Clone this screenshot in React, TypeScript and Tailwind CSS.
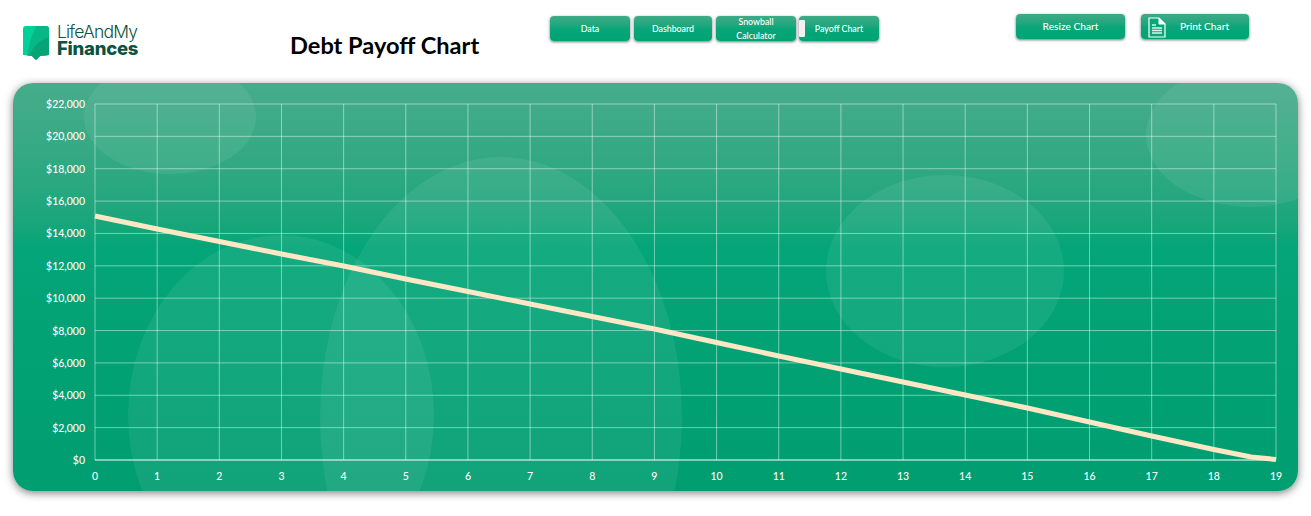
import React from "react";

const font = { fontFamily: '"Lato", "Open Sans", sans-serif' };

const X0 = 95;
const X1 = 1276;
const Y0 = 104;
const Y1 = 460;
const stepX = (X1 - X0) / 19;
const stepY = (Y1 - Y0) / 11;

const navButtons = [
  { label: "Data", w: "w-[80px]", ml: "ml-0" },
  { label: "Dashboard", w: "w-[78px]", ml: "ml-[4px]" },
  { label: "Snowball Calculator", w: "w-[80px]", ml: "ml-[4px]" },
];

function GreenButton({ className, children }: { className: string; children: React.ReactNode }) {
  return (
    <div
      className={`flex items-center justify-center rounded-[4px] bg-gradient-to-b from-[#3dab87] via-[#0aa67a] to-[#00a374] text-center text-white shadow-[0_1px_3px_rgba(0,0,0,0.55)] ${className}`}
    >
      {children}
    </div>
  );
}

function Logo() {
  return (
    <div className="flex items-center gap-[8px]">
      <svg width="26" height="34" viewBox="0 0 26 34" aria-hidden="true">
        <path d="M3 0H23a3 3 0 0 1 3 3V29L17 30L13 34L9 30L0 29V3a3 3 0 0 1 3-3Z" fill="#03cf98" />
        <path d="M13 0H23a3 3 0 0 1 3 3V29L17 30L13 34L9 30L4 29.500C6 19 9 8 13 0Z" fill="#05b886" />
        <path d="M26 11V29L17 30L13 34L9 30L6 29.700C10 21 17 14 26 11Z" fill="#07a478" />
      </svg>
      <div className="mb-[4px] flex w-[84px] flex-col font-['Inter'] text-[#0c5240]">
        <span className="h-[16px] text-[17.500px] leading-[15px] font-light tracking-[-0.800px]">LifeAndMy</span>
        <span className="h-[17px] text-[18.500px] leading-[17px] font-extrabold tracking-[-0.250px]">Finances</span>
      </div>
    </div>
  );
}

function Chart() {
  const points = [
    [0, 216], [1, 229], [2, 241.500], [3, 254], [4, 266], [5, 279], [6, 291.500], [7, 304],
    [8, 316.500], [9, 329], [10, 342.500], [11, 356], [12, 369], [13, 382], [14, 395],
    [15, 408], [16, 422], [17, 436], [18, 449.500], [18.600, 457], [19, 459.500],
  ];
  const line = points.map(([i, y]) => `${X0 + i * stepX - 13},${y - 83}`).join(" ");

  return (
    <svg width="1285" height="408" viewBox="0 0 1285 408" className="block" style={font}>
      <g fill="#fff" fillOpacity="0.07">
        <ellipse cx="157" cy="34" rx="86" ry="57" />
        <ellipse cx="268" cy="332" rx="153" ry="180" />
        <ellipse cx="488" cy="334" rx="181" ry="260" />
        <ellipse cx="932" cy="188" rx="119" ry="96" />
        <ellipse cx="1237" cy="52" rx="104" ry="72" />
      </g>
      <g stroke="#fff" strokeOpacity="0.45" strokeWidth="1">
        {Array.from({ length: 20 }, (_, i) => (
          <line key={i} x1={X0 - 13 + i * stepX} x2={X0 - 13 + i * stepX} y1={Y0 - 83} y2={Y1 - 83} />
        ))}
        {Array.from({ length: 11 }, (_, i) => (
          <line key={i} x1={X0 - 13} x2={X1 - 13} y1={Y0 - 83 + i * stepY} y2={Y0 - 83 + i * stepY} />
        ))}
      </g>
      <line x1={X0 - 13} x2={X1 - 13} y1={Y1 - 83} y2={Y1 - 83} stroke="#fff" strokeWidth="1.200" />
      <polyline points={line} fill="none" stroke="#fde7c4" strokeWidth="5" />
      <g fill="#fff" fontSize="10.500" fontWeight="500">
        {Array.from({ length: 12 }, (_, i) => (
          <text key={i} x="72" y={Y1 - 83 + 4 - i * stepY} textAnchor="end">
            ${(i * 2000).toLocaleString("en-US")}
          </text>
        ))}
        {Array.from({ length: 20 }, (_, i) => (
          <text key={i} x={X0 - 13 + i * stepX} y="397" textAnchor="middle">
            {i}
          </text>
        ))}
      </g>
    </svg>
  );
}

export default function App() {
  return (
    <div className="h-[516px] w-[1311px] overflow-hidden bg-white" style={font}>
      <header className="flex h-[83px] items-start">
        <div className="ml-[23px] mt-[24px] w-[267px]">
          <Logo />
        </div>
        <h1 className="mt-[30px] w-[260px] text-[23.600px] leading-[30px] font-bold text-black">Debt Payoff Chart</h1>
        <div className="mt-[16px] flex text-[8.800px] leading-[14px] font-medium">
          {navButtons.map((b) => (
            <GreenButton key={b.label} className={`h-[25px] ${b.w} ${b.ml}`}>
              <span className="max-w-[60px]">{b.label}</span>
            </GreenButton>
          ))}
          <GreenButton className="relative ml-[3px] h-[25px] w-[80px]">
            <span className="absolute left-0 top-[4px] h-[17px] w-[6px] rounded-[1px] bg-[#f1f1f1]" />
            Payoff Chart
          </GreenButton>
        </div>
        <div className="ml-[137px] mt-[14px] flex gap-[16px] text-[10.200px] font-medium">
          <GreenButton className="h-[25px] w-[109px]">Resize Chart</GreenButton>
          <GreenButton className="relative h-[25px] w-[108px] pl-[19px]">
            <svg
              className="absolute left-[7px] top-[3px]"
              width="18"
              height="21"
              viewBox="0 0 18 21"
              fill="none"
              aria-hidden="true"
            >
              <path d="M1 1H11L17 7V20H1Z" fill="#0aa67a" stroke="#fff" strokeWidth="1.200" />
              <path d="M11 1V7H17" fill="#fff" stroke="#fff" strokeWidth="1" />
              <path d="M4 8H8M4 11H14M4 13.500H14M4 16H14" stroke="#d8f3e8" strokeWidth="1.400" />
            </svg>
            Print Chart
          </GreenButton>
        </div>
      </header>
      <main className="ml-[13px] h-[408px] w-[1285px] overflow-hidden rounded-[20px] bg-gradient-to-b from-[#47ac8b] via-[#04a578] via-40% to-[#009d70] shadow-[0_2px_9px_rgba(0,0,0,0.5)]">
        <Chart />
      </main>
    </div>
  );
}
